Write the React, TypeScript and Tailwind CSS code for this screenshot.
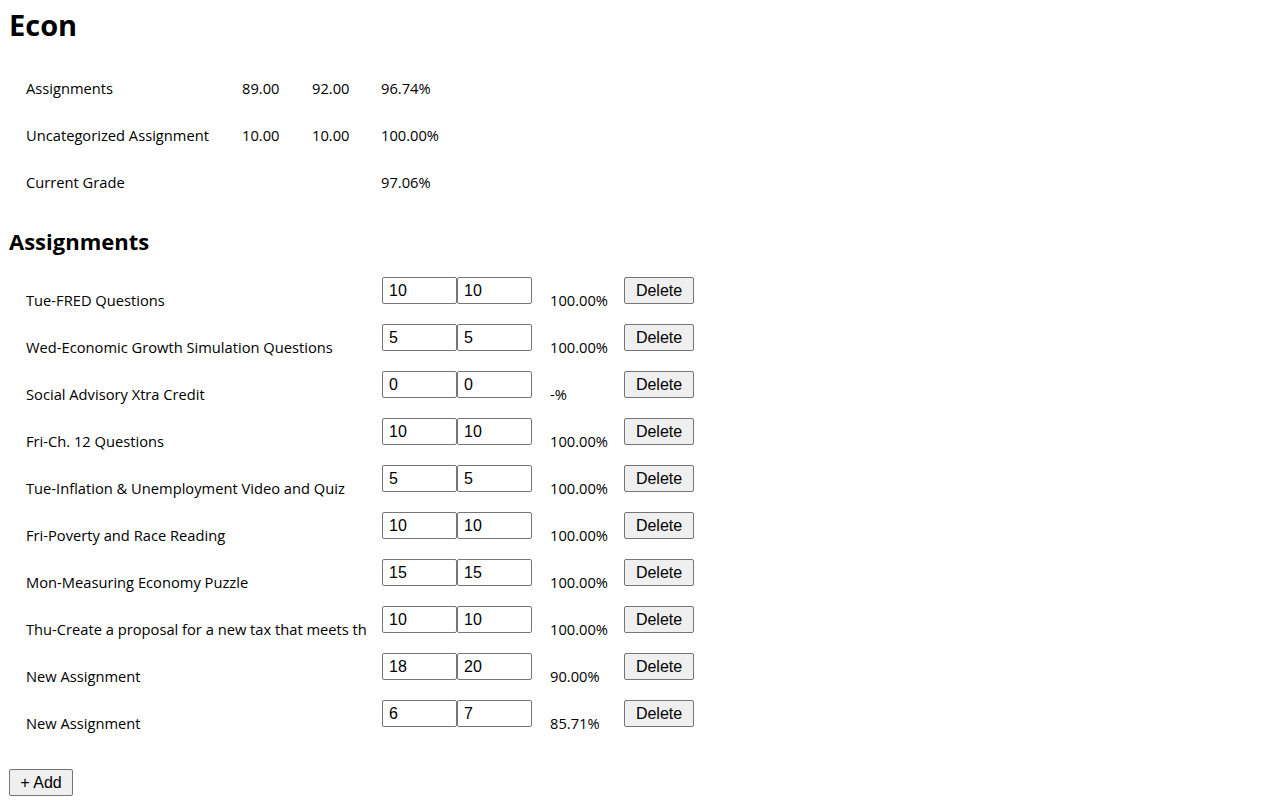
import React from "react";

const resumo = [
  { nome: "Assignments", pontos: "89.00", total: "92.00", pct: "96.74%" },
  { nome: "Uncategorized Assignment", pontos: "10.00", total: "10.00", pct: "100.00%" },
  { nome: "Current Grade", pontos: "", total: "", pct: "97.06%" },
];

const tarefas = [
  { nome: "Tue-FRED Questions", pontos: "10", total: "10", pct: "100.00%" },
  { nome: "Wed-Economic Growth Simulation Questions", pontos: "5", total: "5", pct: "100.00%" },
  { nome: "Social Advisory Xtra Credit", pontos: "0", total: "0", pct: "-%" },
  { nome: "Fri-Ch. 12 Questions", pontos: "10", total: "10", pct: "100.00%" },
  { nome: "Tue-Inflation & Unemployment Video and Quiz", pontos: "5", total: "5", pct: "100.00%" },
  { nome: "Fri-Poverty and Race Reading", pontos: "10", total: "10", pct: "100.00%" },
  { nome: "Mon-Measuring Economy Puzzle", pontos: "15", total: "15", pct: "100.00%" },
  { nome: "Thu-Create a proposal for a new tax that meets th", pontos: "10", total: "10", pct: "100.00%" },
  { nome: "New Assignment", pontos: "18", total: "20", pct: "90.00%" },
  { nome: "New Assignment", pontos: "6", total: "7", pct: "85.71%" },
];

const texto = "font-['Open_Sans',sans-serif] text-[14.7px] leading-[20px] text-black";
const campo =
  "w-[75px] h-[27px] border border-[#767676] rounded-[2px] px-[6px] font-['Liberation_Sans',Arial,sans-serif] text-[16px] leading-[20px] text-black bg-white";

export default function App() {
  return (
    <main className="px-[9px] bg-white min-h-[800px]">
      <h1 className="pt-[7px] font-['Open_Sans',sans-serif] font-bold text-[29px] leading-[36px] text-black">
        Econ
      </h1>

      <div className="mt-[21px] pl-[17px]">
        {resumo.map((linha) => (
          <div key={linha.nome} className={`flex items-center h-[47px] ${texto}`}>
            <span className="w-[216px]">{linha.nome}</span>
            <span className="w-[70px]">{linha.pontos}</span>
            <span className="w-[69px]">{linha.total}</span>
            <span>{linha.pct}</span>
          </div>
        ))}
      </div>

      <h2 className="mt-[21px] font-['Open_Sans',sans-serif] font-bold text-[22px] leading-[30px] text-black">
        Assignments
      </h2>

      <div className="mt-[15px] pl-[17px]">
        {tarefas.map((t, i) => (
          <div key={i} className="flex items-start h-[47px]">
            <div className={`w-[340px] mr-[16px] pt-[19px] overflow-hidden whitespace-nowrap ${texto}`}>
              {t.nome}
            </div>
            <input className={`mt-[6px] ${campo}`} defaultValue={t.pontos} />
            <input className={`mt-[6px] ${campo}`} defaultValue={t.total} />
            <div className={`w-[74px] ml-[18px] pt-[19px] ${texto}`}>{t.pct}</div>
            <button className="mt-[6px] w-[70px] h-[27px] border border-[#767676] rounded-[2px] bg-[#efefef] font-['Liberation_Sans',Arial,sans-serif] text-[16px] leading-[20px] text-black">
              Delete
            </button>
          </div>
        ))}
      </div>

      <button className="mt-[28px] w-[64px] h-[27px] border border-[#767676] rounded-[2px] bg-[#efefef] font-['Liberation_Sans',Arial,sans-serif] text-[16px] leading-[20px] text-black">
        + Add
      </button>
    </main>
  );
}
